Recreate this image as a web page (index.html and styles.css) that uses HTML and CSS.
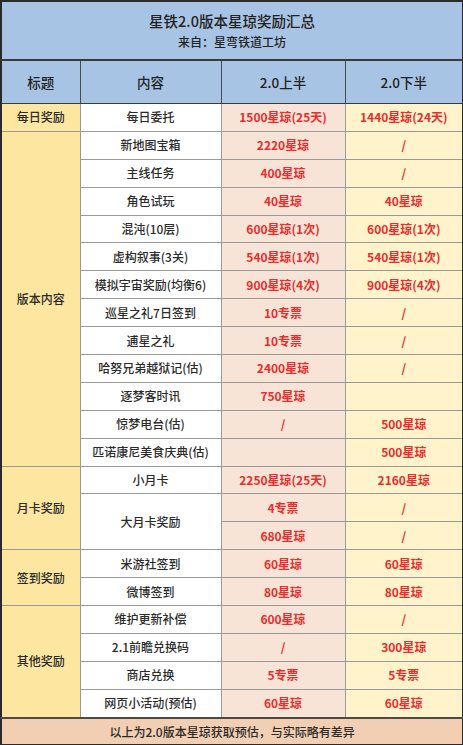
FILE: index.html
```html
<!DOCTYPE html>
<html lang="zh-CN">
<head>
<meta charset="utf-8">
<title>星铁2.0版本星琼奖励汇总</title>
<link rel="stylesheet" href="styles.css">
</head>
<body>
<table class="sheet">
  <colgroup>
    <col class="c1"><col class="c2"><col class="c3"><col class="c4">
  </colgroup>
  <thead>
    <tr class="title-row">
      <th colspan="4">
        <div class="title">星铁2.0版本星琼奖励汇总</div>
        <div class="subtitle">来自：星弯铁道工坊</div>
      </th>
    </tr>
    <tr class="head-row">
      <th>标题</th><th>内容</th><th>2.0上半</th><th>2.0下半</th>
    </tr>
  </thead>
  <tbody>
    <tr><td class="cat">每日奖励</td><td class="name">每日委托</td><td class="a">1500星琼(25天)</td><td class="b">1440星琼(24天)</td></tr>

    <tr><td class="cat" rowspan="12">版本内容</td><td class="name">新地图宝箱</td><td class="a">2220星琼</td><td class="b">/</td></tr>
    <tr><td class="name">主线任务</td><td class="a">400星琼</td><td class="b">/</td></tr>
    <tr><td class="name">角色试玩</td><td class="a">40星琼</td><td class="b">40星琼</td></tr>
    <tr><td class="name">混沌(10层)</td><td class="a">600星琼(1次)</td><td class="b">600星琼(1次)</td></tr>
    <tr><td class="name">虚构叙事(3关)</td><td class="a">540星琼(1次)</td><td class="b">540星琼(1次)</td></tr>
    <tr><td class="name">模拟宇宙奖励(均衡6)</td><td class="a">900星琼(4次)</td><td class="b">900星琼(4次)</td></tr>
    <tr><td class="name">巡星之礼7日签到</td><td class="a">10专票</td><td class="b">/</td></tr>
    <tr><td class="name">逋星之礼</td><td class="a">10专票</td><td class="b">/</td></tr>
    <tr><td class="name">哈努兄弟越狱记(估)</td><td class="a">2400星琼</td><td class="b">/</td></tr>
    <tr><td class="name">逐梦客时讯</td><td class="a">750星琼</td><td class="b"></td></tr>
    <tr><td class="name">惊梦电台(估)</td><td class="a">/</td><td class="b">500星琼</td></tr>
    <tr><td class="name">匹诺康尼美食庆典(估)</td><td class="a"></td><td class="b">500星琼</td></tr>

    <tr><td class="cat" rowspan="3">月卡奖励</td><td class="name">小月卡</td><td class="a">2250星琼(25天)</td><td class="b">2160星琼</td></tr>
    <tr><td class="name" rowspan="2">大月卡奖励</td><td class="a">4专票</td><td class="b">/</td></tr>
    <tr><td class="a">680星琼</td><td class="b">/</td></tr>

    <tr><td class="cat" rowspan="2">签到奖励</td><td class="name">米游社签到</td><td class="a">60星琼</td><td class="b">60星琼</td></tr>
    <tr><td class="name">微博签到</td><td class="a">80星琼</td><td class="b">80星琼</td></tr>

    <tr><td class="cat" rowspan="4">其他奖励</td><td class="name">维护更新补偿</td><td class="a">600星琼</td><td class="b">/</td></tr>
    <tr><td class="name">2.1前瞻兑换码</td><td class="a">/</td><td class="b">300星琼</td></tr>
    <tr><td class="name">商店兑换</td><td class="a">5专票</td><td class="b">5专票</td></tr>
    <tr><td class="name">网页小活动(预估)</td><td class="a">60星琼</td><td class="b">60星琼</td></tr>
  </tbody>
  <tfoot>
    <tr class="foot-row"><td colspan="4">以上为2.0版本星琼获取预估，与实际略有差异</td></tr>
  </tfoot>
</table>
</body>
</html>
```

FILE: styles.css
```css
html, body {
  margin: 0;
  padding: 0;
  background: #ffffff;
}

body {
  font-family: "Noto Sans CJK SC", "Noto Sans", sans-serif;
  color: #2b2b2b;
}

.sheet {
  width: 462px;
  table-layout: fixed;
  border-collapse: collapse;
  border: 2px solid #2a2a2a;
}

.c1 { width: 79px; }
.c2 { width: 141px; }
.c3 { width: 124px; }
.c4 { width: 118px; }

.sheet th,
.sheet td {
  padding: 0;
  text-align: center;
  vertical-align: middle;
  white-space: nowrap;
  border: 1px solid #9a9a9a;
  font-weight: 500;
}

.title-row th {
  height: 57px;
  background: #a8c4e4;
  border-bottom: 2px solid #3a3a3a;
}

.title {
  font-size: 14.5px;
  line-height: 20px;
  margin-top: 1px;
  color: #222222;
}

.subtitle {
  font-size: 12px;
  line-height: 18px;
  margin-top: 2px;
  color: #222222;
}

.head-row th {
  height: 42px;
  background: #a8c4e4;
  font-size: 13.5px;
  color: #222222;
  border: 1px solid #4a4a4a;
  border-bottom: 1px solid #3a3a3a;
}

.sheet tbody td {
  height: 26.9px;
  font-size: 12px;
  line-height: 16px;
}

.cat {
  background: #fce6a0;
  color: #2b2b2b;
}

.name {
  background: #ffffff;
  color: #2b2b2b;
}

.sheet tbody td.a {
  background: #f8e4d7;
  color: #e62e2c;
  font-weight: 700;
}

.sheet tbody td.b {
  background: #fff3cc;
  color: #e62e2c;
  font-weight: 700;
}

.foot-row td {
  height: 25px;
  background: #f2ceb2;
  font-size: 12px;
  color: #2b2b2b;
  border-top: 2px solid #4a4a4a;
}
```
